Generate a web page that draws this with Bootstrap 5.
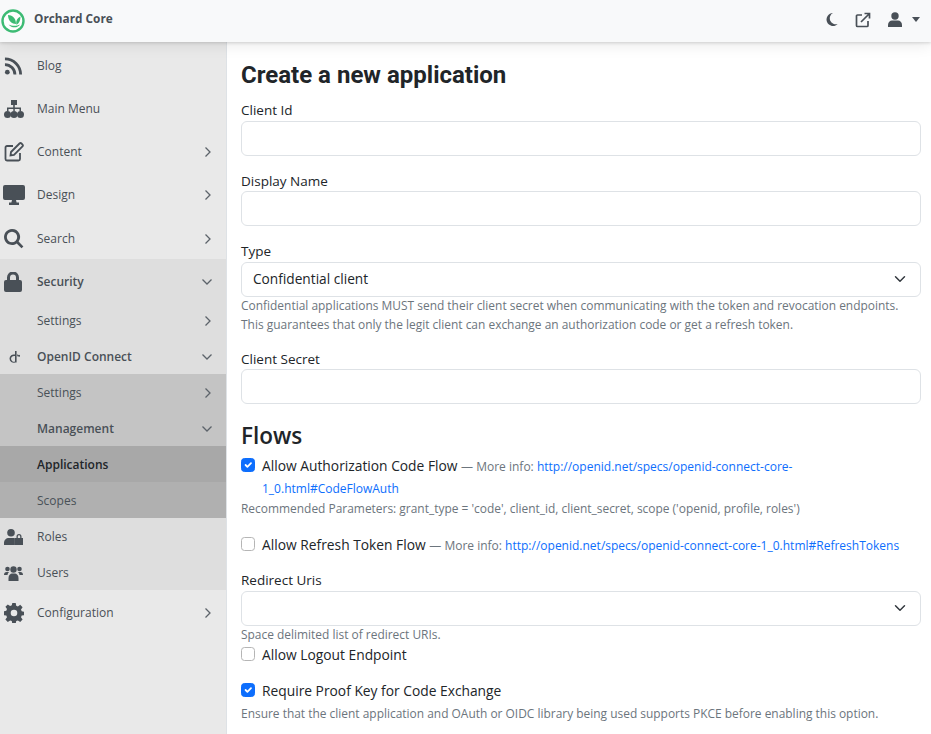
<!DOCTYPE html>
<html lang="en">
<head>
    <meta charset="UTF-8">
    <meta name="viewport" content="width=device-width, initial-scale=1.0">
    <title>Orchard Core</title>
    <link href="https://cdn.jsdelivr.net/npm/bootstrap@5.3.2/dist/css/bootstrap.min.css" rel="stylesheet">
    <script src="https://cdn.jsdelivr.net/npm/bootstrap@5.3.2/dist/js/bootstrap.bundle.min.js"></script>
    <style>
        html, body { height: 100%; overflow: hidden; }
        body { font-family: "Open Sans", "Noto Sans", sans-serif; font-size: 14px; color: #212529; background: #fff; }
        .top-bar { height: 42px; background: #f8f9fa; box-shadow: 0 1px 3px rgba(0,0,0,.14), 0 2px 16px rgba(0,0,0,.10); position: relative; z-index: 2; }
        .brand-logo { fill: none; margin-left: 1px; flex: none; }
        .brand-name { font-size: 11.8px; font-weight: 700; color: #495057; margin-left: 9px; margin-top: -4px; }
        .top-bar .tool-ico { fill: #495057; display: block; }
        .top-bar .tool-line { fill: none; stroke: #495057; stroke-width: 1.7; display: block; }
        .tools { margin-top: -3px; }
        .tool-gap { margin-left: 17px; }
        .caret-down { border-top: 5px solid #495057; border-left: 4.5px solid transparent; border-right: 4.5px solid transparent; margin-left: 10px; margin-right: 11px; margin-top: -1px; }
        .page-wrap { height: 692px; }
        .side-menu { width: 227px; flex: none; background: #e9e9e9; border-right: 1px solid #dee2e6; font-size: 12px; color: #495057; overflow: hidden; padding-top: 1px; }
        .menu-row { display: flex; align-items: center; padding: 2px 14px 0 0; height: 36px; }
        .menu-row.tall { height: 43.2px; padding-top: 2.500px; }
        .menu-row .ico { width: 37px; flex: none; padding-left: 4px; }
        .menu-row .ico svg { fill: #495057; display: block; }
        .menu-row .ico .nudge-left { margin-left: -1px; }
        .menu-row .ico .nudge-right { margin-left: 3px; }
        .menu-row .lbl { flex: 1; }
        .menu-row .chev { fill: none; stroke: #5c636a; stroke-width: 1.3; flex: none; }
        .menu-row .chev.open { margin-right: -1px; }
        .group-a { background: #dedede; }
        .group-b { background: #c4c4c4; }
        .group-c { background: #b0b0b0; }
        .menu-row.active { background: #a8a8a8; color: #212529; font-weight: 600; }
        .menu-row.strong { font-weight: 600; }
        .form-pane { flex: 1; padding: 17px 10px 0 14px; overflow: hidden; }
        .form-pane h1 { font-family: Roboto, sans-serif; font-size: 24px; font-weight: 700; margin: 0 0 10px; line-height: 32px; }
        .form-pane h2 { font-size: 22.5px; font-weight: 600; margin: 0 0 5px; padding-top: 2px; line-height: 28px; }
        .form-pane .form-label { margin-bottom: .5px; font-size: 13.5px; line-height: 19px; display: block; }
        .form-pane .form-control, .form-pane .form-select { height: 35px; font-size: 13.7px; padding-left: 11px; }
        .form-pane .form-text { font-size: 11.95px; color: #6c757d; line-height: 19px; margin-top: 0; }
        .form-pane .form-select + .form-text { margin-top: -1px; }
        .form-pane .form-check { font-size: 13.8px; line-height: 21px; margin-bottom: 0; padding-left: 21px; }
        .form-pane .form-check .form-check-input { width: 14px; height: 14px; margin-left: -21px; margin-top: 3px; border-color: #b5b5b5; }
        .form-pane .form-check .form-check-input:checked { border-color: #0d6efd; }
        .form-pane .form-check .more-info { font-size: 12px; color: #6c757d; }
        .form-pane a { color: #0d6efd; text-decoration: none; font-size: 12px; }
        .field-gap { margin-bottom: 16px; }
        .check-gap { margin-bottom: 13px !important; }
        .after-logout { margin-bottom: 12px !important; }
    </style>
</head>
<body>
    <header class="top-bar d-flex align-items-center">
        <svg width="24" height="24" viewBox="0 0 24 24" class="brand-logo">
            <circle cx="12" cy="12" r="10.500" fill="#fff" stroke="#3dbb74" stroke-width="2.400"></circle>
            <path d="M7 6c4 0 8 3 8 9-4 0-8-3-8-9z" fill="#3dbb74"></path>
            <path d="M19.500 7.500c0 4-1.500 7-4 8.200-1-3 .5-6.700 4-8.200z" fill="#3dbb74"></path>
            <path d="M7.500 15.500c3 1.500 8 2 11.500 0-2 3.500-8 4-11.500 0z" fill="#3dbb74"></path>
        </svg>
        <span class="brand-name">Orchard Core</span>
        <div class="tools ms-auto d-flex align-items-center">
            <svg width="12" height="13" viewBox="0 0 12 13" class="tool-ico"><path d="M7 0a6.500 6.500 0 1 0 4.700 11A6 6 0 0 1 7 0z"></path></svg>
            <svg width="16" height="16" viewBox="0 0 16 16" class="tool-line tool-gap">
                <path d="M7 3H2.500A1 1 0 0 0 1.500 4v9.500a1 1 0 0 0 1 1H12a1 1 0 0 0 1-1V9"></path>
                <path d="M6 10 14.500 1.500M9.500 1.500h5v5"></path>
            </svg>
            <svg width="14" height="15" viewBox="0 0 14 15" class="tool-ico tool-gap">
                <circle cx="7" cy="4" r="3.700"></circle>
                <path d="M0 15v-2c0-3 2-4.500 4-4.500h6c2 0 4 1.500 4 4.500v2z"></path>
            </svg>
            <span class="caret-down"></span>
        </div>
    </header>

    <div class="page-wrap d-flex">
        <nav class="side-menu">
            <div class="menu-row tall">
                <span class="ico"><svg width="19" height="20" viewBox="0 0 20 20"><circle cx="3.500" cy="16.500" r="2.500"></circle><path d="M1 7v3a9 9 0 0 1 9 9h3A12 12 0 0 0 1 7z"></path><path d="M1 1v3a15 15 0 0 1 15 15h3A18 18 0 0 0 1 1z"></path></svg></span>
                <span class="lbl">Blog</span>
            </div>
            <div class="menu-row tall">
                <span class="ico"><svg class="nudge-left" width="22" height="20" viewBox="0 0 22 20"><path d="M8 1h6v5h-2.200v2.500H18V12h-1.500v-2H11.800v2h-1.500v-2H5.500v2H4V8.500h6.200V6H8z"></path><circle cx="4.500" cy="15.500" r="3.500"></circle><circle cx="11" cy="15.500" r="3.500"></circle><circle cx="17.500" cy="15.500" r="3.500"></circle></svg></span>
                <span class="lbl">Main Menu</span>
            </div>
            <div class="menu-row tall">
                <span class="ico"><svg width="20" height="20" viewBox="0 0 20 20"><path d="M9 4H3a1.500 1.500 0 0 0-1.500 1.500v11.500A1.500 1.500 0 0 0 3 18.500h11.500a1.500 1.500 0 0 0 1.500-1.500v-6" fill="none" stroke="#495057" stroke-width="1.800"></path><path d="M7 10 15.500 1.500a1.500 1.500 0 0 1 2 0l1 1a1.500 1.500 0 0 1 0 2L10 13l-3.500.5z" fill="none" stroke="#495057" stroke-width="1.800"></path></svg></span>
                <span class="lbl">Content</span>
                <svg class="chev" width="8" height="12" viewBox="0 0 8 12"><path d="M1.500 1.500 6 6l-4.500 4.500"></path></svg>
            </div>
            <div class="menu-row tall">
                <span class="ico"><svg class="nudge-left" width="22" height="20" viewBox="0 0 22 20"><path d="M2 0h18a2 2 0 0 1 2 2v11a2 2 0 0 1-2 2h-7l.6 2.500h2.400V20H6v-2.500h2.400L9 15H2a2 2 0 0 1-2-2V2a2 2 0 0 1 2-2z"></path></svg></span>
                <span class="lbl">Design</span>
                <svg class="chev" width="8" height="12" viewBox="0 0 8 12"><path d="M1.500 1.500 6 6l-4.500 4.500"></path></svg>
            </div>
            <div class="menu-row tall">
                <span class="ico"><svg width="20" height="20" viewBox="0 0 20 20"><path d="M8 0a8 8 0 1 0 4.700 14.500l4.800 4.800 1.900-1.900-4.800-4.800A8 8 0 0 0 8 0zm0 2.800a5.200 5.200 0 1 1 0 10.400A5.200 5.200 0 0 1 8 2.800z"></path></svg></span>
                <span class="lbl">Search</span>
                <svg class="chev" width="8" height="12" viewBox="0 0 8 12"><path d="M1.500 1.500 6 6l-4.500 4.500"></path></svg>
            </div>
            <div class="group-a">
                <div class="menu-row tall strong">
                    <span class="ico"><svg width="18" height="20" viewBox="0 0 18 20"><path d="M3 8V5.500a6 6 0 0 1 12 0V8h1a2 2 0 0 1 2 2v8a2 2 0 0 1-2 2H2a2 2 0 0 1-2-2v-8a2 2 0 0 1 2-2zm3 0h6V5.500a3 3 0 0 0-6 0z"></path></svg></span>
                    <span class="lbl">Security</span>
                    <svg class="chev open" width="12" height="8" viewBox="0 0 12 8"><path d="M1.500 1.500 6 6l4.500-4.500"></path></svg>
                </div>
                <div class="menu-row">
                    <span class="ico"></span>
                    <span class="lbl">Settings</span>
                    <svg class="chev" width="8" height="12" viewBox="0 0 8 12"><path d="M1.500 1.500 6 6l-4.500 4.500"></path></svg>
                </div>
                <div class="menu-row strong">
                    <span class="ico"><svg class="nudge-right" width="14" height="12" viewBox="0 0 14 12"><path d="M8 0h1.600v11.500H8z"></path><path d="M8 3.600v1.500a2.900 2.900 0 1 0 0 5.400v1.100a4.200 4.200 0 1 1 0-8z"></path><path d="M10 3.500c1 .2 1.500.5 2 .8l1-.6v2l-3-.5.8-.3-.8-.3z"></path></svg></span>
                    <span class="lbl">OpenID Connect</span>
                    <svg class="chev open" width="12" height="8" viewBox="0 0 12 8"><path d="M1.500 1.500 6 6l4.500-4.500"></path></svg>
                </div>
                <div class="group-b">
                    <div class="menu-row">
                        <span class="ico"></span>
                        <span class="lbl">Settings</span>
                        <svg class="chev" width="8" height="12" viewBox="0 0 8 12"><path d="M1.500 1.500 6 6l-4.500 4.500"></path></svg>
                    </div>
                    <div class="menu-row strong">
                        <span class="ico"></span>
                        <span class="lbl">Management</span>
                        <svg class="chev open" width="12" height="8" viewBox="0 0 12 8"><path d="M1.500 1.500 6 6l4.500-4.500"></path></svg>
                    </div>
                    <div class="group-c">
                        <div class="menu-row active">
                            <span class="ico"></span>
                            <span class="lbl">Applications</span>
                        </div>
                        <div class="menu-row">
                            <span class="ico"></span>
                            <span class="lbl">Scopes</span>
                        </div>
                    </div>
                </div>
                <div class="menu-row">
                    <span class="ico"><svg width="19" height="16" viewBox="0 0 19 16"><circle cx="7" cy="3.800" r="3.800"></circle><path d="M0 16v-2c0-3 2-5 5-5h4.500c.5 0 1 0 1.400.2V16z"></path><path d="M12.500 9V7.500a2.500 2.500 0 0 1 5 0V9h1.500v7h-8V9zm1.300 0h2.400V7.500a1.200 1.200 0 0 0-2.400 0z"></path></svg></span>
                    <span class="lbl">Roles</span>
                </div>
                <div class="menu-row">
                    <span class="ico"><svg width="19" height="16" viewBox="0 0 19 16"><circle cx="3.500" cy="4" r="2.300"></circle><circle cx="15.500" cy="4" r="2.300"></circle><circle cx="9.500" cy="4.500" r="3.200"></circle><path d="M0 10c0-2 1-3 2.500-3H5c-1 1-1.500 2-1.500 3zM19 10c0-2-1-3-2.500-3H14c1 1 1.500 2 1.500 3z"></path><path d="M4.500 16v-3c0-3 2-4.500 3.500-4.500h3c1.500 0 3.500 1.500 3.500 4.500v3z"></path></svg></span>
                    <span class="lbl">Users</span>
                </div>
            </div>
            <div class="menu-row tall">
                <span class="ico"><svg width="20" height="20" viewBox="0 0 20 20"><path d="M8.300 0h3.400l.5 2.700 1.700.7 2.300-1.600 2.400 2.400-1.600 2.300.7 1.700 2.700.5v3.400l-2.700.5-.7 1.700 1.600 2.300-2.400 2.400-2.300-1.600-1.700.7-.5 2.700H8.300l-.5-2.700-1.700-.7-2.300 1.600-2.400-2.400 1.600-2.300-.7-1.700-2.700-.5V8.300l2.700-.5.7-1.700-1.600-2.300 2.400-2.400 2.300 1.600 1.700-.7zM10 6.700a3.300 3.300 0 1 0 0 6.600 3.300 3.300 0 0 0 0-6.600z" fill-rule="evenodd"></path></svg></span>
                <span class="lbl">Configuration</span>
                <svg class="chev" width="8" height="12" viewBox="0 0 8 12"><path d="M1.500 1.500 6 6l-4.500 4.500"></path></svg>
            </div>
        </nav>

        <main class="form-pane">
            <h1>Create a new application</h1>
            <div class="field-gap">
                <label class="form-label" for="clientId">Client Id</label>
                <input type="text" class="form-control" id="clientId">
            </div>
            <div class="field-gap">
                <label class="form-label" for="displayName">Display Name</label>
                <input type="text" class="form-control" id="displayName">
            </div>
            <div class="field-gap">
                <label class="form-label" for="appType">Type</label>
                <select class="form-select" id="appType"><option>Confidential client</option></select>
                <div class="form-text">Confidential applications MUST send their client secret when communicating with the token and revocation endpoints.<br>This guarantees that only the legit client can exchange an authorization code or get a refresh token.</div>
            </div>
            <div class="field-gap">
                <label class="form-label" for="clientSecret">Client Secret</label>
                <input type="text" class="form-control" id="clientSecret">
            </div>
            <h2>Flows</h2>
            <div class="form-check">
                <input class="form-check-input" type="checkbox" id="authFlow" checked>
                <label class="form-check-label" for="authFlow">Allow Authorization Code Flow <span class="more-info">— More info: </span><a href="#">http://openid.net/specs/openid-connect-core-1_0.html#CodeFlowAuth</a></label>
            </div>
            <div class="form-text mb-3">Recommended Parameters: grant_type = 'code', client_id, client_secret, scope ('openid, profile, roles')</div>
            <div class="form-check check-gap">
                <input class="form-check-input" type="checkbox" id="refreshFlow">
                <label class="form-check-label" for="refreshFlow">Allow Refresh Token Flow <span class="more-info">— More info: </span><a href="#">http://openid.net/specs/openid-connect-core-1_0.html#RefreshTokens</a></label>
            </div>
            <div>
                <label class="form-label" for="redirectUris">Redirect Uris</label>
                <select class="form-select" id="redirectUris"></select>
                <div class="form-text">Space delimited list of redirect URIs.</div>
            </div>
            <div class="form-check after-logout">
                <input class="form-check-input" type="checkbox" id="logoutEndpoint">
                <label class="form-check-label" for="logoutEndpoint">Allow Logout Endpoint</label>
            </div>
            <div class="form-check">
                <input class="form-check-input" type="checkbox" id="pkce" checked>
                <label class="form-check-label" for="pkce">Require Proof Key for Code Exchange</label>
            </div>
            <div class="form-text">Ensure that the client application and OAuth or OIDC library being used supports PKCE before enabling this option.</div>
        </main>
    </div>
</body>
</html>
